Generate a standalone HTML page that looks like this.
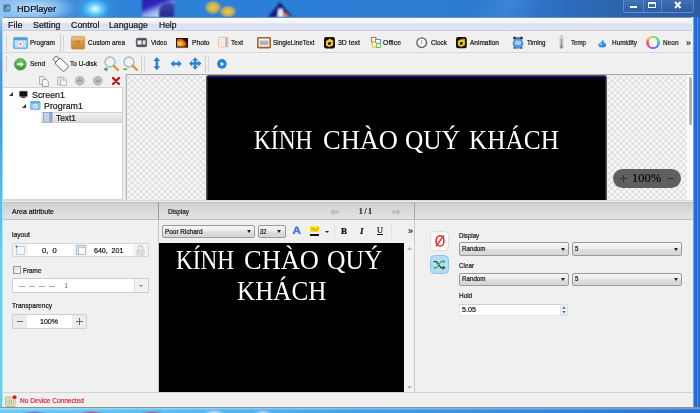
<!DOCTYPE html>
<html>
<head>
<meta charset="utf-8">
<title>HDPlayer</title>
<style>
*{box-sizing:border-box;margin:0;padding:0}
html,body{width:700px;height:413px;overflow:hidden;background:#3b8ad6;font-family:"Liberation Sans",sans-serif;}
#root{position:absolute;left:0;top:0;width:700px;height:413px;overflow:hidden;}
.abs{position:absolute}
.t{position:absolute;white-space:pre;transform-origin:0 50%;-webkit-text-stroke:.22px currentColor}
svg{position:absolute;overflow:visible}
#title{position:absolute;left:0;top:0;width:700px;height:18px;overflow:hidden;
 background:linear-gradient(90deg,#8cc0ee 0px,#4a97df 40px,#2f83d8 120px,#2b7ed6 300px,#2b7cd2 450px,#2d72c4 540px,#2d62ad 620px,#2c5ca4 700px);}
#frameL{position:absolute;left:0;top:17px;width:3.4px;height:396px;background:linear-gradient(90deg,rgba(255,255,255,.12),rgba(255,255,255,0) 40%,rgba(255,255,255,0) 68%,rgba(255,255,255,.55) 82%),linear-gradient(180deg,#96c8f2 0,#5aa4ea 4%,#3f96e8 12%,#2f9bea 27%,#44bdf2 45%,#58caf6 60%,#5ccbf6 100%)}
#frameR{position:absolute;left:693px;top:17px;width:7px;height:396px;background:linear-gradient(90deg,#9cc0ea 0,#2a74d8 18%,#1b68d2 52%,#5c98e0 62%,#2a6ec8 76%,#2a6cc8 100%)}
#frameB{position:absolute;left:0;top:407.4px;width:700px;height:6px;overflow:hidden;border-top:.8px solid #8c8f94;background:linear-gradient(180deg,rgba(255,255,255,.4) 0,rgba(255,255,255,0) 40%,rgba(0,0,60,.06) 100%),linear-gradient(90deg,#74d2f5 0,#5cc3f3 25%,#4aa8ec 50%,#3a8ee2 75%,#2a72d4 100%)}
#client{position:absolute;left:3px;top:17px;width:690px;height:391px;background:#f0f0f0;}
#menubar{position:absolute;left:3px;top:17px;width:689px;height:14px;background:linear-gradient(#fdfdfe 0%,#f1f3fa 36%,#dce1f2 52%,#dfe4f3 100%);border-bottom:1px solid #c6cbdb;border-top:.7px solid #6f8fc0}
.combo{position:absolute;border:1px solid #9a9a9a;border-radius:2px;background:linear-gradient(#f6f6f6 0%,#ececec 45%,#dddddd 55%,#d6d6d6 100%);}
.ar{position:absolute;width:0;height:0;border-left:2.5px solid transparent;border-right:2.5px solid transparent;border-top:3px solid #222}
.hdr{position:absolute;height:17.6px;background:linear-gradient(#cecece 0,#d8d8d8 35%,#e3e3e3 100%);border-top:1px solid #c2c2c2;border-bottom:1px solid #c0c0c0}
.grip{position:absolute;width:1px;height:15px;background:repeating-linear-gradient(#b9b9b9 0 1px,transparent 1px 2px)}
.sep{position:absolute;width:1px;background:#cfcfcf}
.checker{position:absolute;overflow:hidden;background:#d2d2d2;border-left:1px solid #bcbcbc}
.checker i{position:absolute;left:0;top:0;right:0;bottom:0;background-image:radial-gradient(circle at 50% 50%,#fff 0,#fff 18%,rgba(255,255,255,0) 66%),radial-gradient(circle at 50% 50%,#fff 0,#fff 18%,rgba(255,255,255,0) 66%);background-size:6px 6px;background-position:1.8px -.4px,4.8px 2.6px}
.big{position:absolute;white-space:nowrap;color:#fff;font-family:"Liberation Serif",serif;transform-origin:0 50%}
</style>
</head>
<body>
<div id="root">
<div id="title">
 <div class="abs" style="left:470px;top:-20px;width:70px;height:60px;transform:skewX(-35deg);background:linear-gradient(90deg,rgba(90,160,235,0),rgba(90,160,235,.35) 50%,rgba(90,160,235,0))"></div>
 <div class="abs" style="left:76px;top:-5px;width:38px;height:28px;border-radius:50%;background:radial-gradient(closest-side,rgba(255,255,255,.95),rgba(90,210,255,.85) 40%,rgba(50,170,245,.4) 70%,rgba(50,150,240,0) 100%)"></div>
 <div class="abs" style="left:142px;top:-2px;width:32px;height:19px;filter:blur(1.1px);background:linear-gradient(158deg,#2a16ac 0%,#3426bc 36%,#8fa6e8 56%,#d6e6fb 80%)"><div class="abs" style="left:17px;top:5px;width:15px;height:14px;border-radius:9px 3px 0 0;background:linear-gradient(#3a48a8,#232c8c)"></div></div>
 <div class="abs" style="left:204px;top:0px;width:18px;height:15px;border-radius:50%;background:radial-gradient(closest-side,rgba(245,205,50,1),rgba(225,185,70,.8) 60%,rgba(120,150,160,0) 100%)"></div>
 <div class="abs" style="left:219px;top:5px;width:18px;height:13px;border-radius:50%;background:radial-gradient(closest-side,rgba(245,205,50,1),rgba(225,185,70,.8) 60%,rgba(120,150,160,0) 100%)"></div>
 <svg style="left:266px;top:1px" width="28" height="16" viewBox="0 0 28 16"><defs><filter id="bl"><feGaussianBlur stdDeviation="0.9"/></filter></defs><g filter="url(#bl)"><path d="M14 1 L26 16 H2Z" fill="#141c7c"/><path d="M12.5 8 L16.5 8 L17.5 16 H11.5Z" fill="#e8eef8"/><path d="M18 11 L24 16 H18Z" fill="#e8842a"/></g></svg>
 <div class="abs" style="left:-6px;top:-6px;width:82px;height:28px;border-radius:14px;background:radial-gradient(closest-side,rgba(200,228,250,.95),rgba(170,212,246,.6) 60%,rgba(130,190,240,0) 100%)"></div>
 <svg style="left:3.4px;top:4px" width="7.6" height="8" viewBox="0 0 10 10.5">
  <rect x="0" y="0" width="10" height="10.5" rx="2.6" fill="#2e98ea"/>
  <circle cx="4" cy="4.2" r="1.9" fill="#e8203a"/>
  <circle cx="6.4" cy="5.2" r="1.6" fill="#f0c820"/>
  <circle cx="4.4" cy="6.6" r="1.7" fill="#40c048"/>
  <circle cx="3" cy="5.4" r="1.2" fill="#c838c8"/>
 </svg>
 <div class="t" style="left:17.00px;top:2.60px;font-size:9.6px;line-height:12px;color:#0a0a14;font-family:'Liberation Sans',sans-serif;transform:scaleX(0.9494);">HDPlayer</div>
 <div class="abs" style="left:622.5px;top:-1px;width:71px;height:13.5px;border:1px solid rgba(150,185,225,.42);border-radius:0 0 3px 3px;background:linear-gradient(rgba(100,140,200,.4),rgba(45,88,158,.35))"></div>
 <div class="abs" style="left:642.5px;top:0;width:1px;height:12px;background:rgba(150,185,225,.4)"></div>
 <div class="abs" style="left:661px;top:0;width:1px;height:12px;background:rgba(150,185,225,.4)"></div>
 <div class="abs" style="left:630px;top:5.7px;width:7.4px;height:2.3px;background:#fff;box-shadow:0 0 1px rgba(20,40,80,.7)"></div>
 <div class="abs" style="left:648px;top:2px;width:8px;height:6px;border:1.6px solid #fff;border-top-width:2.2px;box-shadow:0 0 1px rgba(20,40,80,.7)"></div>
 <svg style="left:673.8px;top:2px" width="7.6" height="6" viewBox="0 0 7.6 6"><path d="M1 0 L6.6 6 M6.6 0 L1 6" stroke="#fff" stroke-width="1.9"/></svg>
</div>
<div id="client"></div>
<div id="menubar"></div><div class="t" style="left:7.50px;top:18.50px;font-size:9.2px;line-height:12px;color:#151515;font-family:'Liberation Sans',sans-serif;transform:scaleX(0.9781);">File</div><div class="t" style="left:32.50px;top:18.50px;font-size:9.2px;line-height:12px;color:#151515;font-family:'Liberation Sans',sans-serif;transform:scaleX(0.9601);">Setting</div><div class="t" style="left:70.50px;top:18.50px;font-size:9.2px;line-height:12px;color:#151515;font-family:'Liberation Sans',sans-serif;transform:scaleX(0.9609);">Control</div><div class="t" style="left:109.00px;top:18.50px;font-size:9.2px;line-height:12px;color:#151515;font-family:'Liberation Sans',sans-serif;transform:scaleX(0.9527);">Language</div><div class="t" style="left:158.50px;top:18.50px;font-size:9.2px;line-height:12px;color:#151515;font-family:'Liberation Sans',sans-serif;transform:scaleX(0.9249);">Help</div>
<div class="abs" style="left:3px;top:32px;width:690px;height:21px;background:#f0f0f0;border-bottom:1px solid #d9d9d9"></div><div class="grip" style="left:6px;top:35px"></div><div class="grip" style="left:63px;top:35px"></div><div class="sep" style="left:60px;top:33px;height:19px"></div><div class="t" style="left:30.00px;top:38.00px;font-size:7.6px;line-height:10px;color:#151515;font-family:'Liberation Sans',sans-serif;transform:scaleX(0.8578);">Program</div><div class="t" style="left:88.00px;top:38.00px;font-size:7.6px;line-height:10px;color:#151515;font-family:'Liberation Sans',sans-serif;transform:scaleX(0.8504);">Custom area</div><div class="t" style="left:151.00px;top:38.00px;font-size:7.6px;line-height:10px;color:#151515;font-family:'Liberation Sans',sans-serif;transform:scaleX(0.8289);">Video</div><div class="t" style="left:192.00px;top:38.00px;font-size:7.6px;line-height:10px;color:#151515;font-family:'Liberation Sans',sans-serif;transform:scaleX(0.8811);">Photo</div><div class="t" style="left:230.50px;top:38.00px;font-size:7.6px;line-height:10px;color:#151515;font-family:'Liberation Sans',sans-serif;transform:scaleX(0.8609);">Text</div><div class="t" style="left:273.00px;top:38.00px;font-size:7.6px;line-height:10px;color:#151515;font-family:'Liberation Sans',sans-serif;transform:scaleX(0.8395);">SingleLineText</div><div class="t" style="left:338.00px;top:38.00px;font-size:7.6px;line-height:10px;color:#151515;font-family:'Liberation Sans',sans-serif;transform:scaleX(0.9138);">3D text</div><div class="t" style="left:383.00px;top:38.00px;font-size:7.6px;line-height:10px;color:#151515;font-family:'Liberation Sans',sans-serif;transform:scaleX(0.9131);">Office</div><div class="t" style="left:431.00px;top:38.00px;font-size:7.6px;line-height:10px;color:#151515;font-family:'Liberation Sans',sans-serif;transform:scaleX(0.8419);">Clock</div><div class="t" style="left:470.00px;top:38.00px;font-size:7.6px;line-height:10px;color:#151515;font-family:'Liberation Sans',sans-serif;transform:scaleX(0.8581);">Animation</div><div class="t" style="left:527.00px;top:38.00px;font-size:7.6px;line-height:10px;color:#151515;font-family:'Liberation Sans',sans-serif;transform:scaleX(0.8214);">Timing</div><div class="t" style="left:571.00px;top:38.00px;font-size:7.6px;line-height:10px;color:#151515;font-family:'Liberation Sans',sans-serif;transform:scaleX(0.8071);">Temp</div><div class="t" style="left:612.00px;top:38.00px;font-size:7.6px;line-height:10px;color:#151515;font-family:'Liberation Sans',sans-serif;transform:scaleX(0.8457);">Humidity</div><div class="t" style="left:662.50px;top:38.00px;font-size:7.6px;line-height:10px;color:#151515;font-family:'Liberation Sans',sans-serif;transform:scaleX(0.8531);">Neon</div><div class="t" style="left:686.00px;top:37.00px;font-size:9.5px;line-height:12px;color:#2a2a2a;font-family:'Liberation Sans',sans-serif;transform:scaleX(0.9463);">»</div>
<svg style="left:12.8px;top:36.8px" width="15" height="12" viewBox="0 0 15 12"><defs><linearGradient id="pg" x1="0" y1="0" x2="0" y2="1"><stop offset="0" stop-color="#9ad6f4"/><stop offset="1" stop-color="#6db9e8"/></linearGradient></defs><rect x="0.4" y="0.4" width="14.2" height="11.2" rx="1.6" fill="url(#pg)" stroke="#5aa9de" stroke-width=".8"/><rect x="0.8" y="0.8" width="13.4" height="2.2" rx="1" fill="#4b9fdc"/><rect x="2" y="3.6" width="11" height="6.8" rx=".6" fill="#c4e4f7"/><circle cx="7.5" cy="7" r="3.2" fill="#f4f6f8" stroke="#b4c0cc" stroke-width=".6"/><circle cx="7.5" cy="7" r="1" fill="#d9584a"/></svg>
<svg style="left:71px;top:36.2px" width="14" height="13.4" viewBox="0 0 14 13.4"><defs><linearGradient id="cg" x1="0" y1="0" x2="0" y2="1"><stop offset="0" stop-color="#e2a85c"/><stop offset="1" stop-color="#c98534"/></linearGradient></defs><rect x="0.3" y="0.3" width="13.4" height="12.8" rx="1.6" fill="url(#cg)" stroke="#c08438" stroke-width=".6"/><rect x="0.6" y="0.6" width="12.8" height="4.2" rx="1.4" fill="#e9b870"/><rect x="0.6" y="4.6" width="12.8" height=".8" fill="#c58a40"/><rect x="5.4" y="4.8" width="3.4" height="1.6" rx=".5" fill="#b97a30"/></svg>
<svg style="left:136px;top:38px" width="11" height="9" viewBox="0 0 11 9"><rect x="0.3" y="0.3" width="10.4" height="8.4" rx="1.4" fill="#4b5159" stroke="#3c4148" stroke-width=".6"/><rect x="1.5" y="2.4" width="4" height="4.2" fill="#eef0f3"/><rect x="6.6" y="2.4" width="3" height="4.2" fill="#d9dce1"/></svg>
<svg style="left:176.4px;top:37.6px" width="12.6" height="10.4" viewBox="0 0 12.6 10.4"><defs><radialGradient id="ph" cx="0.3" cy="0.62" r="0.8"><stop offset="0" stop-color="#ffe040"/><stop offset=".35" stop-color="#f59a1c"/><stop offset=".7" stop-color="#c24a0c"/><stop offset="1" stop-color="#2a0c04"/></radialGradient></defs><rect x="0.8" y="0.8" width="11.8" height="9.6" fill="#d8dce2"/><rect x="0" y="0" width="12" height="9.6" fill="#1a100a"/><rect x="0.9" y="0.9" width="10.2" height="7.8" fill="url(#ph)"/><path d="M6.5 0.9 L11.1 0.9 L11.1 5 Z" fill="#1c0a04" opacity=".8"/></svg>
<svg style="left:218px;top:37.4px" width="10.4" height="10.4" viewBox="0 0 10.4 10.4"><rect x="0.4" y="0.4" width="9.6" height="9.6" rx=".8" fill="#fdf6ef" stroke="#e2b594" stroke-width=".8"/><rect x="7" y="0.8" width="2.6" height="8.8" fill="#b9bcc6"/><path d="M1.6 2.6h4.6M1.6 4.4h4.6M1.6 6.2h4.6M1.6 8h4.6" stroke="#ecd2bf" stroke-width=".7"/></svg>
<svg style="left:257px;top:36.8px" width="14" height="11.4" viewBox="0 0 14 11.4"><rect x="0.8" y="0.8" width="12.4" height="9.8" rx=".6" fill="#f3efe9" stroke="#a5611f" stroke-width="1.6"/><rect x="2.8" y="3.6" width="8.4" height="4.4" fill="#aab2c2"/></svg>
<svg style="left:323.8px;top:36.8px" width="11" height="11.4" viewBox="0 0 11 11.4"><rect width="11" height="11.4" rx="2.2" fill="#15110a"/><path d="M2 4 L5.6 2 L9.2 3.4 L9 8.4 L5 10 L2 8.4 Z" fill="#f7c914"/><path d="M5.2 1.2 L7 2.2 L5.4 3Z" fill="#f7c914"/><path d="M4 5.4 L6.8 4.8 L6.8 7.4 L4.2 8Z" fill="#15110a"/></svg>
<svg style="left:371px;top:37px" width="10" height="11" viewBox="0 0 10 11"><rect x="0.4" y="0.4" width="4.6" height="4.6" fill="#fff" stroke="#e2493a" stroke-width=".9"/><rect x="4.6" y="2.4" width="4.8" height="4.2" fill="#fff" stroke="#3b86d8" stroke-width=".9"/><rect x="1.2" y="5.2" width="4.2" height="4.8" fill="#fff" stroke="#e7b32a" stroke-width=".9"/><rect x="5.2" y="6.4" width="4" height="4" fill="#fff" stroke="#57b046" stroke-width=".9"/></svg>
<svg style="left:416px;top:37px" width="11.4" height="11.4" viewBox="0 0 12 12"><circle cx="6" cy="6" r="5.1" fill="#f6f6f6" stroke="#63676c" stroke-width="1.5"/><path d="M6 3.2 L6 6.4 L4.4 8" stroke="#d9685a" stroke-width=".8" fill="none"/></svg>
<svg style="left:456.2px;top:36.8px" width="10.8" height="11.4" viewBox="0 0 11 11.4"><rect width="11" height="11.4" rx="2.2" fill="#15110a"/><path d="M2 4 L5.6 2 L9.2 3.4 L9 8.4 L5 10 L2 8.4 Z" fill="#f7c914"/><path d="M6.8 1.2 L9.6 2.2 L8 3.2Z" fill="#f7c914"/><path d="M4 5.4 L6.8 4.8 L6.8 7.4 L4.2 8Z" fill="#15110a"/></svg>
<svg style="left:511.8px;top:36.2px" width="12" height="12.8" viewBox="0 0 12 12.8"><circle cx="2.6" cy="2" r="1.6" fill="#33363b"/><circle cx="9.4" cy="2" r="1.6" fill="#33363b"/><rect x="2.6" y="1.4" width="6.8" height="1.4" fill="#44484e"/><rect x="1.6" y="11.2" width="2.4" height="1.4" fill="#33363b"/><rect x="8" y="11.2" width="2.4" height="1.4" fill="#33363b"/><circle cx="6" cy="7.4" r="4.9" fill="#4f9ae6" stroke="#3278cc" stroke-width=".8"/><ellipse cx="6" cy="6.8" rx="3.3" ry="2.3" fill="#9fcbf6"/></svg>
<svg style="left:558.8px;top:35px" width="5" height="14" viewBox="0 0 5 14"><rect x="1.1" y="0.4" width="2.8" height="11" rx="1.4" fill="#dfe8f0" stroke="#a4b8cc" stroke-width=".7"/><rect x="1.9" y="3.6" width="1.2" height="8" fill="#e07a24"/><circle cx="2.5" cy="11.8" r="1.9" fill="#7fa4c8"/><circle cx="2.5" cy="11.8" r="1.1" fill="#e07a24"/></svg>
<svg style="left:597.8px;top:38.6px" width="8.6" height="8.6" viewBox="0 0 8.6 8.6"><ellipse cx="4.2" cy="6" rx="3.9" ry="2.5" fill="#2b8fe6"/><path d="M4.6 0.4 C5.4 2 6.4 2.8 6.2 4 A1.8 1.8 0 0 1 2.8 4 C2.8 2.8 4 2 4.6 0.4Z" fill="#3f9fee"/><ellipse cx="2.6" cy="5.2" rx="1.4" ry=".8" fill="#bfe2fb"/><circle cx="6.8" cy="2" r=".6" fill="#a8d4f6"/></svg>
<div class="abs" style="left:646.2px;top:35.8px;width:13.6px;height:13.6px;border-radius:50%;background:conic-gradient(#8fe04a,#4ad890 12%,#3ac8d8 25%,#4a7af0 38%,#a04af0 50%,#f040b0 62%,#f25a4a 75%,#f2c83a 88%,#8fe04a);filter:blur(.3px)"></div>
<div class="abs" style="left:648.8px;top:38.4px;width:8.4px;height:8.4px;border-radius:50%;background:#f4f4f4;box-shadow:0 0 1px #f4f4f4"></div>

<div class="abs" style="left:3px;top:54px;width:690px;height:20.5px;background:#f0f0f0;border-bottom:1px solid #a9a9a9"></div><div class="grip" style="left:6px;top:56px"></div><div class="grip" style="left:144px;top:56px"></div><div class="grip" style="left:208px;top:56px"></div><div class="sep" style="left:141px;top:55px;height:18px"></div><div class="sep" style="left:205px;top:55px;height:18px"></div><div class="t" style="left:30.00px;top:59.00px;font-size:7.6px;line-height:10px;color:#151515;font-family:'Liberation Sans',sans-serif;transform:scaleX(0.8451);">Send</div><div class="t" style="left:70.00px;top:59.00px;font-size:7.6px;line-height:10px;color:#151515;font-family:'Liberation Sans',sans-serif;transform:scaleX(0.8524);">To U-disk</div>
<svg style="left:13.8px;top:57.8px" width="12.6" height="12.6" viewBox="0 0 13 13"><defs><linearGradient id="sg" x1="0" y1="0" x2="0" y2="1"><stop offset="0" stop-color="#6cc452"/><stop offset="1" stop-color="#2f9a30"/></linearGradient></defs><circle cx="6.5" cy="6.5" r="6" fill="url(#sg)" stroke="#2f9230" stroke-width=".7"/><path d="M3 5.5h3.6V3.6L10.2 6.5 6.6 9.4V7.5H3z" fill="#fff"/></svg>
<svg style="left:53px;top:56px" width="16" height="16" viewBox="0 0 16 16"><g transform="rotate(-45 8 8)" fill="#fbfbfb" stroke="#555" stroke-width=".9"><rect x="5.6" y="-1" width="4.8" height="4"/><rect x="4.2" y="3" width="7.6" height="12.4" rx="1.6"/></g></svg>
<svg style="left:103px;top:56px" width="17" height="16" viewBox="0 0 17 16"><circle cx="7" cy="6" r="5" fill="#eaf4fb" stroke="#a9b4bd" stroke-width="1.3"/><path d="M10.8 9.8 L15 14" stroke="#d99a3c" stroke-width="2.4" stroke-linecap="round"/><path d="M1 13.2h4M3 11.2v4" stroke="#35b24a" stroke-width="1.4"/></svg>
<svg style="left:122px;top:56px" width="17" height="16" viewBox="0 0 17 16"><circle cx="7" cy="6" r="5" fill="#eaf4fb" stroke="#a9b4bd" stroke-width="1.3"/><path d="M10.8 9.8 L15 14" stroke="#d99a3c" stroke-width="2.4" stroke-linecap="round"/><path d="M1 13.2h4" stroke="#35b24a" stroke-width="1.4"/></svg>
<svg style="left:152.6px;top:57px" width="7.6" height="13.4" viewBox="0 0 8 14"><path d="M4 0 L7.6 4.2 H5.3 V9.8 H7.6 L4 14 L0.4 9.8 H2.7 V4.2 H0.4Z" fill="#2a82d4"/></svg>
<svg style="left:169.8px;top:60.4px" width="12.4" height="7.4" viewBox="0 0 12 8"><path d="M0 4 L3.8 0.2 V2.7 H8.2 V0.2 L12 4 L8.2 7.8 V5.3 H3.8 V7.8Z" fill="#2a82d4"/></svg>
<svg style="left:189px;top:57.2px" width="12.4" height="13" viewBox="0 0 12 12"><path d="M6 0 L8.8 3 H7.1 V4.9 H9 V3.2 L12 6 L9 8.8 V7.1 H7.1 V9 H8.8 L6 12 L3.2 9 H4.9 V7.1 H3 V8.8 L0 6 L3 3.2 V4.9 H4.9 V3 H3.2Z" fill="#2a82d4"/></svg>
<svg style="left:217.4px;top:59px" width="9.8" height="9.8" viewBox="0 0 10 10"><circle cx="5" cy="5" r="4.9" fill="#1c86d6"/><path d="M3.8 2.7 L7.4 5 L3.8 7.3Z" fill="#fff"/></svg>

<div class="abs" style="left:3px;top:74px;width:120px;height:14px;background:#f0f0f0"></div><div class="abs" style="left:3px;top:87px;width:120px;height:113px;background:#fff;border:1px solid #d4d4d4;border-left:none"></div><div class="abs" style="left:123px;top:74px;width:3px;height:126px;background:#f0f0f0;border-right:1px solid #dcdcdc"></div><div class="abs" style="left:41px;top:111.5px;width:81px;height:11.5px;background:linear-gradient(#f4f4f4,#dadada);border:1px solid #d0d0d0;border-width:.5px 0"></div><div class="t" style="left:31.50px;top:88.70px;font-size:9.4px;line-height:12px;color:#1a1a1a;font-family:'Liberation Sans',sans-serif;transform:scaleX(0.9425);">Screen1</div><div class="t" style="left:44.00px;top:100.00px;font-size:9.4px;line-height:12px;color:#1a1a1a;font-family:'Liberation Sans',sans-serif;transform:scaleX(0.9449);">Program1</div><div class="t" style="left:56.00px;top:112.00px;font-size:9.4px;line-height:12px;color:#1a1a1a;font-family:'Liberation Sans',sans-serif;transform:scaleX(0.8902);">Text1</div>
<svg style="left:8.5px;top:92px" width="4" height="4" viewBox="0 0 4 4"><path d="M4 0V4H0Z" fill="#333"/></svg>
<svg style="left:21.5px;top:103.5px" width="4" height="4" viewBox="0 0 4 4"><path d="M4 0V4H0Z" fill="#333"/></svg>
<svg style="left:18.8px;top:90.5px" width="8.8" height="7.4" viewBox="0 0 9 8"><rect x="0.3" y="0.3" width="8.4" height="5.6" rx=".6" fill="#111" stroke="#444" stroke-width=".5"/><rect x="2.2" y="6.6" width="4.6" height="1.1" fill="#333"/><rect x="3.6" y="5.8" width="1.8" height="1" fill="#333"/></svg>
<svg style="left:30px;top:101.2px" width="10.5" height="9" viewBox="0 0 10.5 9"><rect x="0.3" y="0.3" width="9.9" height="8.4" rx="1.2" fill="#86c6ef" stroke="#62aee2" stroke-width=".6"/><rect x="0.6" y="0.6" width="9.3" height="1.6" fill="#55a4de"/><circle cx="5.25" cy="5.2" r="2.4" fill="#f4f6f8" stroke="#b4c0cc" stroke-width=".5"/><circle cx="5.25" cy="5.2" r=".8" fill="#d9584a"/></svg>
<svg style="left:43px;top:112px" width="9.5" height="10.5" viewBox="0 0 9.5 10.5"><rect x="0.4" y="0.4" width="8.7" height="9.7" fill="#c9d7e8" stroke="#7f97b6" stroke-width=".8"/><rect x="6.2" y="0.8" width="2.5" height="9" fill="#8fa6c4"/><path d="M1.6 3h3.6M1.6 5h3.6M1.6 7h3.6" stroke="#a9bdd6" stroke-width=".6"/></svg>
<!-- tree header icons -->
<svg style="left:39px;top:75.5px" width="10" height="11" viewBox="0 0 10 11"><path d="M0.6 0.6h4l2 2v5.6h-6z" fill="#f4f6f9" stroke="#8a97a8" stroke-width=".8"/><path d="M3.4 3.4h4l2 2v5h-6z" fill="#f4f6f9" stroke="#8a97a8" stroke-width=".8"/></svg>
<svg style="left:57px;top:76px" width="10" height="10" viewBox="0 0 10 10"><rect x="0.5" y="1.2" width="6.4" height="7.6" fill="#e2e2e2" stroke="#b5b5b5" stroke-width=".8"/><rect x="3.4" y="4" width="6" height="5.4" fill="#f1f1f1" stroke="#b5b5b5" stroke-width=".8"/><rect x="2.2" y="0.4" width="3" height="1.6" fill="#c4c4c4"/></svg>
<svg style="left:75px;top:76px" width="9.5" height="9.5" viewBox="0 0 10 10"><circle cx="5" cy="5" r="4.7" fill="#bdbdbd" stroke="#a6a6a6" stroke-width=".6"/><path d="M2.8 6 L5 3.8 L7.2 6" stroke="#8d8d8d" stroke-width="1.1" fill="none"/></svg>
<svg style="left:93px;top:76px" width="9.5" height="9.5" viewBox="0 0 10 10"><circle cx="5" cy="5" r="4.7" fill="#bdbdbd" stroke="#a6a6a6" stroke-width=".6"/><path d="M2.8 4 L5 6.2 L7.2 4" stroke="#8d8d8d" stroke-width="1.1" fill="none"/></svg>
<svg style="left:111.5px;top:76.5px" width="8" height="8" viewBox="0 0 8 8"><path d="M1 1 L7 7 M7 1 L1 7" stroke="#bf1218" stroke-width="2.3" stroke-linecap="round"/></svg>

<div class="checker" style="left:126px;top:74.5px;width:561px;height:125.5px"><i></i></div><div class="abs" style="left:686.5px;top:74.5px;width:6.5px;height:125.5px;background:#fcfcfc"></div><div class="abs" style="left:688.5px;top:77px;width:3px;height:48px;background:#b4b4b4;border-radius:1.5px"></div><div class="abs" style="left:206.4px;top:75px;width:400.6px;height:125px;background:#000;border:1px solid #555;border-bottom:none;border-radius:3px 3px 0 0"></div><div class="abs" style="left:207.4px;top:76px;width:398.6px;height:124px;background:#000;border:1px solid #1414c4;border-bottom:none;border-radius:2px 2px 0 0"></div><div class="big" style="left:253.60px;top:120.32px;font-size:26.9px;line-height:40px;transform:scaleX(0.8685)">KÍNH</div><div class="big" style="left:322.50px;top:120.32px;font-size:26.9px;line-height:40px;transform:scaleX(0.9839)">CHÀO</div><div class="big" style="left:405.00px;top:120.32px;font-size:26.9px;line-height:40px;transform:scaleX(0.9437)">QUÝ</div><div class="big" style="left:468.80px;top:120.32px;font-size:26.9px;line-height:40px;transform:scaleX(0.9409)">KHÁCH</div><div class="abs" style="left:613px;top:169px;width:68px;height:19px;border-radius:9.5px;background:#5f5f5f"></div><div class="abs" style="left:620px;top:178px;width:6.5px;height:1px;background:#333"></div><div class="abs" style="left:622.8px;top:175px;width:1px;height:7px;background:#333"></div><div class="abs" style="left:667px;top:178px;width:6.5px;height:1px;background:#333"></div><div class="t" style="left:631.70px;top:171.30px;font-size:11.5px;line-height:14px;color:#0c0c0c;font-family:'Liberation Serif',serif;transform:scaleX(1.0921);">100%</div><div class="abs" style="left:3px;top:199.6px;width:690.5px;height:3px;background:#ededed;border-top:1px solid #d8d8d8"></div>
<div class="hdr" style="left:3px;top:202.4px;width:155px"></div><div class="abs" style="left:158px;top:202px;width:1px;height:190px;background:linear-gradient(#9a9a9a 0,#9a9a9a 17px,#c6c6c6 18px)"></div><div class="t" style="left:12.00px;top:206.80px;font-size:7.6px;line-height:10px;color:#151515;font-family:'Liberation Sans',sans-serif;transform:scaleX(0.9205);">Area attribute</div><div class="t" style="left:12.00px;top:229.50px;font-size:7.6px;line-height:10px;color:#151515;font-family:'Liberation Sans',sans-serif;transform:scaleX(0.8875);">layout</div><div class="abs" style="left:12px;top:242.5px;width:136.5px;height:14.2px;border:1px solid #d6d6d6;background:#f3f3f3;border-radius:1px"></div><div class="abs" style="left:28px;top:243.5px;width:45px;height:12px;background:#fff"></div><div class="abs" style="left:88px;top:243.5px;width:45px;height:12px;background:#fff"></div><div class="t" style="left:41.60px;top:245.80px;font-size:7.6px;line-height:10px;color:#151515;font-family:'Liberation Sans',sans-serif;transform:scaleX(1.0008);">0,  0</div><div class="t" style="left:94.00px;top:245.80px;font-size:7.6px;line-height:10px;color:#151515;font-family:'Liberation Sans',sans-serif;transform:scaleX(0.9276);">640,  201</div><svg style="left:15px;top:245px" width="10" height="10" viewBox="0 0 10 10"><rect x="1.5" y="1.5" width="8" height="8" fill="#f3f6f9" stroke="#b8c4d0" stroke-width=".8"/><circle cx="1.6" cy="1.6" r="1.1" fill="#2a72c8"/></svg>
<svg style="left:76px;top:245px" width="10" height="10" viewBox="0 0 10 10"><rect x="0.5" y="0.5" width="9" height="9" fill="#e9eef3" stroke="#9fb0c0" stroke-width=".8"/><rect x="2.6" y="2.6" width="6.9" height="6.9" fill="#f7f9fb" stroke="#9fb0c0" stroke-width=".7"/></svg>
<svg style="left:136px;top:244.5px" width="9" height="11" viewBox="0 0 9 11"><path d="M2.2 5V3.2a2.3 2.3 0 0 1 4.6 0V5" fill="none" stroke="#c9c9c9" stroke-width="1.1"/><rect x="0.8" y="5" width="7.4" height="5.2" rx=".8" fill="#dedede" stroke="#c6c6c6" stroke-width=".6"/></svg><div class="abs" style="left:12.5px;top:266px;width:8px;height:8px;border:1px solid #9a9a9a;background:linear-gradient(135deg,#dcdcdc,#fafafa)"></div><div class="t" style="left:23.00px;top:265.60px;font-size:7.6px;line-height:10px;color:#151515;font-family:'Liberation Sans',sans-serif;transform:scaleX(0.8425);">Frame</div><div class="abs" style="left:12px;top:278.4px;width:136.5px;height:15px;border:1px solid #cfcfcf;background:#fff;border-radius:1px"></div><div class="abs" style="left:133.5px;top:279.4px;width:14px;height:13px;background:#f1f1f1;border-left:1px solid #dcdcdc"></div><div class="ar" style="left:138.5px;top:285px;border-top-color:#888;border-left-width:2.2px;border-right-width:2.2px;border-top-width:2.6px"></div><div class="abs" style="left:19px;top:286.2px;width:36px;height:1px;background:repeating-linear-gradient(90deg,#ababab 0 6px,transparent 6px 10px)"></div><div class="t" style="left:65.00px;top:281.40px;font-size:7.6px;line-height:10px;color:#666;font-family:'Liberation Sans',sans-serif;transform:scaleX(0.5914);">1</div><div class="t" style="left:12.00px;top:300.50px;font-size:7.6px;line-height:10px;color:#151515;font-family:'Liberation Sans',sans-serif;transform:scaleX(0.8661);">Transparency</div><div class="abs" style="left:12px;top:314px;width:75px;height:14.5px;border:1px solid #cfcfcf;background:#ececec;border-radius:1px"></div><div class="abs" style="left:27px;top:315px;width:45px;height:12.5px;background:#fff"></div><div class="abs" style="left:16.5px;top:320.7px;width:6.5px;height:1px;background:#6a6a6a"></div><div class="abs" style="left:76px;top:320.7px;width:6.5px;height:1px;background:#6a6a6a"></div><div class="abs" style="left:78.8px;top:318px;width:1px;height:6.5px;background:#6a6a6a"></div><div class="t" style="left:40.00px;top:316.60px;font-size:7.6px;line-height:10px;color:#151515;font-family:'Liberation Sans',sans-serif;transform:scaleX(0.9260);">100%</div>
<div class="hdr" style="left:159px;top:202.4px;width:255px"></div><div class="abs" style="left:414px;top:202px;width:1px;height:190px;background:linear-gradient(#a4a4a4 0,#a4a4a4 17px,#cacaca 18px)"></div><div class="t" style="left:167.50px;top:206.50px;font-size:7.6px;line-height:10px;color:#151515;font-family:'Liberation Sans',sans-serif;transform:scaleX(0.8427);">Display</div><svg style="left:330px;top:207.5px" width="9" height="8" viewBox="0 0 9 8"><path d="M0 4 L4 0.4 V2.6 H9 V5.4 H4 V7.6Z" fill="#bdbdbd"/></svg><svg style="left:392px;top:207.5px" width="9" height="8" viewBox="0 0 9 8"><path d="M9 4 L5 0.4 V2.6 H0 V5.4 H5 V7.6Z" fill="#bdbdbd"/></svg><div class="t" style="left:358.80px;top:206.50px;font-size:8.4px;line-height:10px;color:#222;font-family:'Liberation Serif',serif;transform:scaleX(0.8705);font-weight:bold;">1 / 1</div><div class="combo" style="left:162px;top:224.5px;width:93px;height:13.5px"></div><div class="ar" style="left:247px;top:230px"></div><div class="t" style="left:164.50px;top:226.60px;font-size:7.6px;line-height:10px;color:#151515;font-family:'Liberation Sans',sans-serif;transform:scaleX(0.8455);">Poor Richard</div><div class="combo" style="left:257.5px;top:224.5px;width:28px;height:13.5px"></div><div class="ar" style="left:277px;top:230px"></div><div class="t" style="left:260.00px;top:226.60px;font-size:7.6px;line-height:10px;color:#151515;font-family:'Liberation Sans',sans-serif;transform:scaleX(0.7689);">32</div><svg style="left:292px;top:226.2px" width="9.4" height="8.2" viewBox="0 0 10 9"><path d="M0.3 8.8 L3.4 1.2 Q5 -0.6 6.6 1.2 L9.7 8.8 L7.2 8.8 L6.5 6.8 L3.5 6.8 L2.8 8.8Z M4.1 5 L5.9 5 L5 2.8Z" fill="#3f83d6" fill-rule="evenodd"/></svg><div class="abs" style="left:310px;top:226.4px;width:8.6px;height:5.4px;background:#f4e71c;border-radius:1px"></div><div class="abs" style="left:314px;top:228.6px;width:6px;height:1.3px;background:#e08a3a;transform:rotate(-38deg)"></div><div class="abs" style="left:311.4px;top:227.6px;width:3.6px;height:2.4px;background:#b99a1a;opacity:.6"></div><div class="abs" style="left:310px;top:233.6px;width:9px;height:2px;background:#111"></div><div class="ar" style="left:324.5px;top:230.5px;border-left-width:2.2px;border-right-width:2.2px;border-top-width:2.6px"></div><div class="sep" style="left:333.5px;top:224px;height:15px;background:#e2e2e2"></div><div class="t" style="left:341.00px;top:225.50px;font-size:9px;line-height:11px;color:#111;font-family:'Liberation Serif',serif;transform:scaleX(0.9995);font-weight:bold;">B</div><div class="t" style="left:359.50px;top:225.50px;font-size:9px;line-height:11px;color:#111;font-family:'Liberation Serif',serif;transform:scaleX(0.9994);font-weight:bold;font-style:italic;">I</div><div class="t" style="left:376.50px;top:225.30px;font-size:8.6px;line-height:11px;color:#111;font-family:'Liberation Serif',serif;transform:scaleX(0.9661);text-decoration:underline;">U</div><div class="sep" style="left:390.5px;top:224px;height:15px;background:#e2e2e2"></div><div class="t" style="left:408.00px;top:224.60px;font-size:9.5px;line-height:12px;color:#2a2a2a;font-family:'Liberation Sans',sans-serif;transform:scaleX(0.9463);">»</div><div class="abs" style="left:159px;top:243px;width:245px;height:149px;background:#000"></div><div class="abs" style="left:404px;top:243px;width:10px;height:149px;background:#f2f2f2"></div><svg style="left:406.5px;top:246.5px" width="5" height="3" viewBox="0 0 5 3"><path d="M0 3 L2.5 0 L5 3Z" fill="#b5b5b5"/></svg><svg style="left:406.5px;top:385.5px" width="5" height="3" viewBox="0 0 5 3"><path d="M0 0 L2.5 3 L5 0Z" fill="#b5b5b5"/></svg><div class="big" style="left:175.50px;top:240.32px;font-size:26.9px;line-height:40px;transform:scaleX(0.8641)">KÍNH</div><div class="big" style="left:244.00px;top:240.32px;font-size:26.9px;line-height:40px;transform:scaleX(0.9839)">CHÀO</div><div class="big" style="left:326.60px;top:240.32px;font-size:26.9px;line-height:40px;transform:scaleX(0.9506)">QUÝ</div><div class="big" style="left:236.80px;top:271.12px;font-size:26.9px;line-height:40px;transform:scaleX(0.9347)">KHÁCH</div>
<div class="hdr" style="left:415px;top:202.4px;width:278.5px"></div><div class="abs" style="left:430.3px;top:231.2px;width:18.6px;height:19.4px;border-radius:4.5px;background:#fcfcfc;border:1px solid #dedede"></div><svg style="left:433.6px;top:234.4px" width="12" height="13.4" viewBox="0 0 12 13.4"><ellipse cx="6" cy="6.9" rx="4" ry="5.2" fill="none" stroke="#ee1c24" stroke-width="1.5"/><path d="M2 12.4 L10 1.2" stroke="#ee1c24" stroke-width="1.3"/></svg><div class="abs" style="left:430.2px;top:255.4px;width:19px;height:18.8px;border-radius:4.5px;background:#b4dcf7;border:1px solid #86c4f0"></div><svg style="left:433.4px;top:259px" width="13" height="12" viewBox="0 0 13 12"><path d="M0.5 2.6 H3.4 L8 8.8 H10.4" fill="none" stroke="#24503a" stroke-width="1.4"/><path d="M0.5 8.8 H3.4 L8 2.6 H10.4" fill="none" stroke="#3fb54a" stroke-width="1.4"/><path d="M9.8 0.6 L12.6 2.6 L9.8 4.6Z" fill="#3fb54a"/><path d="M9.8 6.8 L12.6 8.8 L9.8 10.8Z" fill="#24503a"/></svg><div class="t" style="left:458.80px;top:230.50px;font-size:7.6px;line-height:10px;color:#151515;font-family:'Liberation Sans',sans-serif;transform:scaleX(0.8106);">Display</div><div class="combo" style="left:459px;top:242px;width:110px;height:13.5px"></div><div class="ar" style="left:560.5px;top:247.5px"></div><div class="t" style="left:461.50px;top:243.80px;font-size:7.6px;line-height:10px;color:#151515;font-family:'Liberation Sans',sans-serif;transform:scaleX(0.8180);">Random</div><div class="combo" style="left:572px;top:242px;width:110px;height:13.5px"></div><div class="ar" style="left:673.5px;top:247.5px"></div><div class="t" style="left:574.60px;top:243.80px;font-size:7.6px;line-height:10px;color:#151515;font-family:'Liberation Sans',sans-serif;transform:scaleX(0.8044);">5</div><div class="t" style="left:458.80px;top:261.00px;font-size:7.6px;line-height:10px;color:#151515;font-family:'Liberation Sans',sans-serif;transform:scaleX(0.8369);">Clear</div><div class="combo" style="left:459px;top:272.5px;width:110px;height:13.5px"></div><div class="ar" style="left:560.5px;top:278px"></div><div class="t" style="left:461.50px;top:274.30px;font-size:7.6px;line-height:10px;color:#151515;font-family:'Liberation Sans',sans-serif;transform:scaleX(0.8180);">Random</div><div class="combo" style="left:572px;top:272.5px;width:110px;height:13.5px"></div><div class="ar" style="left:673.5px;top:278px"></div><div class="t" style="left:574.60px;top:274.30px;font-size:7.6px;line-height:10px;color:#151515;font-family:'Liberation Sans',sans-serif;transform:scaleX(0.8044);">5</div><div class="t" style="left:458.80px;top:291.30px;font-size:7.6px;line-height:10px;color:#151515;font-family:'Liberation Sans',sans-serif;transform:scaleX(0.8445);">Hold</div><div class="abs" style="left:458.8px;top:303.6px;width:109.4px;height:12px;background:#fff;border:1px solid #e6e6e6;border-top-color:#cfcfcf;border-radius:1px"></div><div class="abs" style="left:560px;top:304.4px;width:7.6px;height:10.4px;background:#eef1f5;border:1px solid #dde1e8"></div><svg style="left:561.9px;top:305.7px" width="3.8" height="7.8" viewBox="0 0 4 8"><path d="M0 2.8 L2 0.4 L4 2.8Z M0 5.2 L2 7.6 L4 5.2Z" fill="#5a6a8a"/></svg><div class="t" style="left:461.50px;top:305.00px;font-size:7.6px;line-height:10px;color:#151515;font-family:'Liberation Sans',sans-serif;transform:scaleX(0.9465);">5.05</div>
<div class="abs" style="left:3px;top:392px;width:690.5px;height:15.6px;background:#f0f0f0;border-top:1px solid #d2d2d2"></div><svg style="left:5px;top:394.5px" width="12" height="12" viewBox="0 0 12 12"><rect x="0.5" y="2" width="9.6" height="9.5" rx="1" fill="#f1e2c0" stroke="#c9a86a" stroke-width=".8"/><rect x="2" y="4" width="6.6" height="6" fill="#fdfcf8" stroke="#b9b08c" stroke-width=".5"/><path d="M2 6h6.6M2 8h6.6M4.2 4v6M6.4 4v6" stroke="#57a04a" stroke-width=".5"/><circle cx="9.6" cy="2.2" r="1.9" fill="#e6141e"/></svg><div class="t" style="left:20.00px;top:396.10px;font-size:7.6px;line-height:10px;color:#ee1c2c;font-family:'Liberation Sans',sans-serif;transform:scaleX(0.8657);">No Device Connected</div>
<div id="frameL"></div>
<div id="frameR"></div>
<div id="frameB"><div class="abs" style="left:21px;top:2.2px;width:26px;height:3.4px;border-radius:50%;background:radial-gradient(closest-side,rgba(130,70,165,.75),rgba(120,80,180,0))"></div><div class="abs" style="left:79px;top:2.2px;width:25px;height:3.4px;border-radius:50%;background:radial-gradient(closest-side,rgba(200,50,80,.8),rgba(190,60,110,0))"></div><div class="abs" style="left:141px;top:2.2px;width:22px;height:3.4px;border-radius:50%;background:radial-gradient(closest-side,rgba(190,60,100,.75),rgba(150,70,150,0))"></div><div class="abs" style="left:204px;top:2px;width:20px;height:5px;border-radius:50%;background:radial-gradient(closest-side,rgba(240,245,255,.8),rgba(230,240,255,0))"></div><div class="abs" style="left:254px;top:2px;width:18px;height:5px;border-radius:50%;background:radial-gradient(closest-side,rgba(240,245,255,.7),rgba(230,240,255,0))"></div></div>
</div>
</body>
</html>
